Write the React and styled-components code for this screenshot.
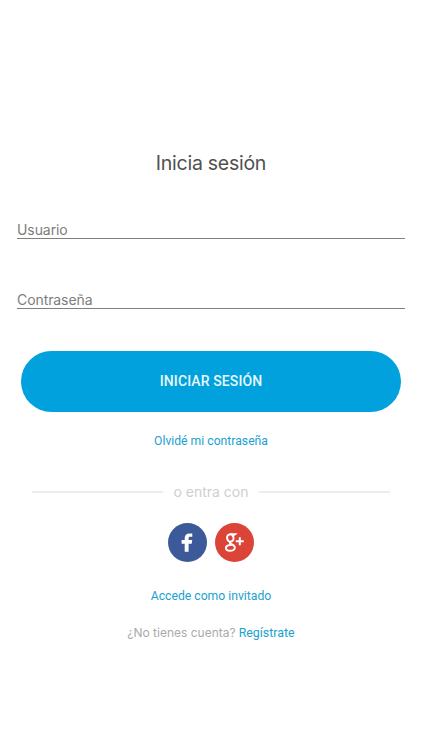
import React from "react";
import styled, { createGlobalStyle } from "styled-components";

const GlobalStyle = createGlobalStyle`
  * { box-sizing: border-box; }
  body { margin: 0; background: #fff; }
`;

const Screen = styled.main`
  width: 100%;
  min-height: 750px;
  padding-top: 150px;
  display: flex;
  flex-direction: column;
  background: #fff;
  font-family: Inter, sans-serif;
`;

const Title = styled.h1`
  margin: 0;
  height: 26px;
  line-height: 26px;
  text-align: center;
  font-size: 19.5px;
  font-weight: 400;
  letter-spacing: -0.26px;
  color: #505050;
`;

const Fields = styled.div`
  display: grid;
  gap: 50px;
  margin: 43px 17px 42px;
`;

const Field = styled.input`
  display: block;
  width: 100%;
  height: 20px;
  padding: 1px 0 0;
  border: 0;
  border-bottom: 1px solid #808080;
  border-radius: 0;
  outline: 0;
  background: transparent;
  font: 400 14px/18px Inter, sans-serif;
  letter-spacing: -0.08px;
  &::placeholder { color: #7d7d7d; opacity: 1; }
`;

const SubmitButton = styled.button`
  height: 61px;
  margin: 0 21px;
  padding: 0;
  border: 0;
  border-radius: 31px;
  background: #00a1dc;
  color: #e9f8fd;
  font: 500 14px/61px Roboto, sans-serif;
  letter-spacing: 0.1px;
`;

const Link = styled.a`
  color: #1ba1d0;
  font-family: Roboto, sans-serif;
  font-size: ${({ $size }) => $size || 12.2}px;
  line-height: 18px;
  text-decoration: none;
`;

const LinkRow = styled.div`
  display: flex;
  justify-content: center;
  height: 18px;
  margin-top: ${({ $gap }) => $gap}px;
`;

const Divider = styled.div`
  display: flex;
  align-items: center;
  gap: 10px;
  height: 20px;
  margin: 32px 32px 0;
  font-size: 14px;
  line-height: 20px;
  color: #cfcfcf;
  &::before, &::after {
    content: "";
    flex: 1;
    height: 2px;
    background: #ececec;
  }
`;

const SocialRow = styled.div`
  display: flex;
  justify-content: center;
  gap: 8px;
  margin-top: 21px;
`;

const SocialButton = styled.button`
  width: 39px;
  height: 39px;
  padding: 0;
  border: 0;
  border-radius: 50%;
  background: ${({ $color }) => $color};
  svg { display: block; }
`;

const SignUp = styled.p`
  display: flex;
  justify-content: center;
  gap: 3px;
  margin: 19px 0 0;
  font-size: 12px;
  line-height: 18px;
  color: #aaa;
`;

const FacebookIcon = () => (
  <svg width="39" height="39" viewBox="0 0 39 39" fill="#fff">
    <path d="M16.7 28.8V20.7H13.6V17H16.7V15.1C16.7 12 18.5 10.4 21.4 10.4C22.6 10.4 23.8 10.5 24.3 10.6V13.8H22.2C20.9 13.8 20.6 14.5 20.6 15.4V17H24.2L23.7 20.7H20.6V28.8Z" />
  </svg>
);

const GooglePlusIcon = () => (
  <svg width="39" height="39" viewBox="0 0 39 39" fill="none" stroke="#fff">
    <ellipse cx="15.3" cy="15" rx="3.2" ry="3.7" strokeWidth="2" transform="rotate(-14 15.3 15)" />
    <path d="M15.5 11H21L19.6 12.2H17.2" strokeWidth="1.3" />
    <path d="M15.8 18.7C14.3 19.3 14.5 20.4 16 21C18.7 22.1 20.2 23.1 19.8 25.1C19.4 27 17.3 27.8 15 27.8C12.5 27.8 10.9 26.8 10.9 25.1C10.9 23 13.5 22 16.7 21.8" strokeWidth="1.9" />
    <path d="M24.8 14.3V22.3M20.8 18.3H28.8" strokeWidth="2" />
  </svg>
);

export default function App() {
  return (
    <>
      <GlobalStyle />
      <Screen>
        <Title>Inicia sesión</Title>
        <Fields>
          <Field type="text" placeholder="Usuario" aria-label="Usuario" />
          <Field type="password" placeholder="Contraseña" aria-label="Contraseña" />
        </Fields>
        <SubmitButton type="button">INICIAR SESIÓN</SubmitButton>
        <LinkRow $gap={20}>
          <Link href="#">Olvidé mi contraseña</Link>
        </LinkRow>
        <Divider>o entra con</Divider>
        <SocialRow>
          <SocialButton type="button" $color="#3c5a99" aria-label="Facebook">
            <FacebookIcon />
          </SocialButton>
          <SocialButton type="button" $color="#db4437" aria-label="Google+">
            <GooglePlusIcon />
          </SocialButton>
        </SocialRow>
        <LinkRow $gap={25}>
          <Link href="#">Accede como invitado</Link>
        </LinkRow>
        <SignUp>
          <span>¿No tienes cuenta?</span>
          <Link href="#" $size={12.4}>Regístrate</Link>
        </SignUp>
      </Screen>
    </>
  );
}
